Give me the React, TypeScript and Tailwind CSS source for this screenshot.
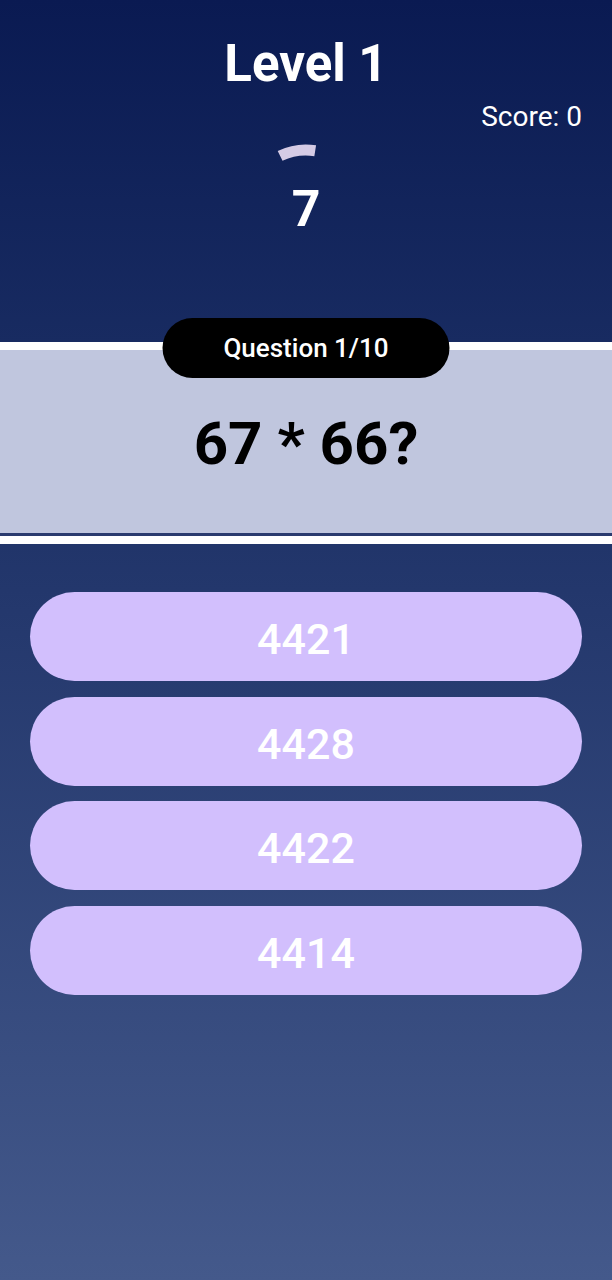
import React from "react";

const answers = ["4421", "4428", "4422", "4414"];

export default function App() {
  return (
    <div className="w-full h-[1280px] bg-linear-to-b from-[#0a1a52] to-[#44598b] font-['Roboto',sans-serif] flex flex-col overflow-hidden">
      {/* Header */}
      <div className="h-[342px] flex flex-col">
        <h1 className="mt-[38px] text-[51px] leading-none font-bold text-white text-center">Level 1</h1>
        <div className="self-end mr-[30px] mt-[14px] text-[28px] leading-none text-white">Score: 0</div>
        <div className="relative self-center mt-[8px] w-[140px] h-[140px] flex items-center justify-center">
          <svg className="absolute inset-0" width="140" height="140" viewBox="0 0 140 140">
            <path
              d="M44.1 16.9 A59 59 0 0 1 79.2 11.7"
              fill="none"
              stroke="#d5cbe5"
              strokeWidth="11"
            />
          </svg>
          <span className="text-[50px] leading-none font-bold text-white">7</span>
        </div>
      </div>

      {/* Question panel */}
      <div className="relative">
        <div className="h-[8px] bg-white" />
        <div className="h-[183px] bg-[#c0c6de] pt-[64px] text-center">
          <span className="text-[60px] leading-none font-bold text-black">67 * 66?</span>
        </div>
        <div className="h-[3px] bg-[#2a3a6e]" />
        <div className="h-[8px] bg-white" />
        <div className="absolute left-1/2 -translate-x-1/2 top-[-24px] w-[287px] h-[60px] rounded-full bg-black flex items-center justify-center">
          <span className="text-[26px] leading-none font-medium text-white">Question 1/10</span>
        </div>
      </div>

      {/* Answers */}
      <div className="mt-[48px] px-[30px] flex flex-col gap-[15.6px]">
        {answers.map((a) => (
          <button
            key={a}
            className="h-[89px] rounded-full bg-[#d2bffd] flex items-center justify-center pt-[6px]"
          >
            <span className="text-[43px] leading-none font-medium text-white">{a}</span>
          </button>
        ))}
      </div>
    </div>
  );
}
